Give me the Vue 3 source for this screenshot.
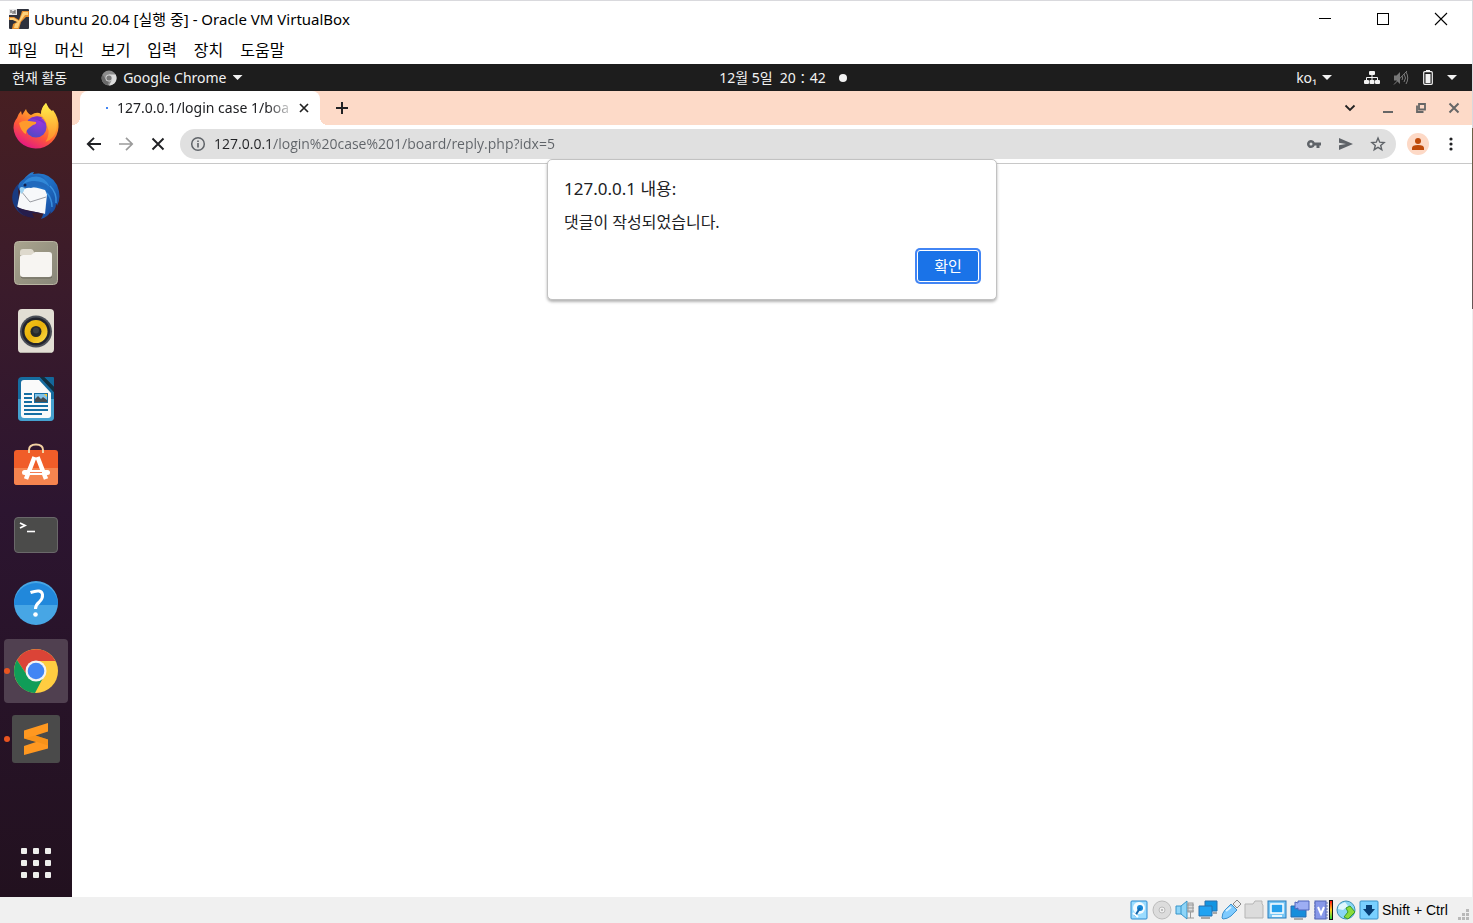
<script setup>
const menus = ['파일', '머신', '보기', '입력', '장치', '도움말']
const tiles = Array.from({ length: 9 }, (_, i) => ({ x: 9 + (i % 3) * 12, y: 9 + Math.floor(i / 3) * 12 }))
</script>

<template>
  <div class="window">
    <header class="titlebar">
      <svg class="app-icon" width="20" height="20" viewBox="0 0 20 20">
        <rect width="20" height="20" rx="1" fill="#2f323d" />
        <path d="M0 8h5l5 3 3-9h7v6h-3l-5 5-2 7H3l1-5 4-2-4-2H0z" fill="#e8902f" />
        <path d="M1 9h4l5 3 4-9h5v3h-3l-5 7-2 6H5l1-4 3-2-5-2H1z" fill="#ffd27c" />
        <rect width="8" height="6" fill="#e9e9ea" />
        <path d="M2 1v3M4 2v3M6 1v4M4.500 3H6" stroke="#555" fill="none" />
      </svg>
      <h1>Ubuntu 20.04 [실행 중] - Oracle VM VirtualBox</h1>
      <div class="win-controls">
        <button type="button" aria-label="최소화"><svg width="14" height="14" viewBox="0 0 14 14"><path d="M1 6.500h12" stroke="#000" /></svg></button>
        <button type="button" aria-label="최대화"><svg width="14" height="14" viewBox="0 0 14 14"><rect x="1.500" y="1.500" width="11" height="11" fill="none" stroke="#000" /></svg></button>
        <button type="button" aria-label="닫기"><svg width="14" height="14" viewBox="0 0 14 14"><path d="M1 1l12 12M13 1L1 13" stroke="#000" stroke-width="1.100" /></svg></button>
      </div>
    </header>

    <nav class="menubar">
      <button v-for="m in menus" :key="m" type="button">{{ m }}</button>
    </nav>

    <div class="guest">
      <div class="panel">
        <div class="panel-left">
          <button type="button" class="activities">현재 활동</button>
          <button type="button" class="app-menu">
            <svg width="16" height="16" viewBox="0 0 16 16">
              <circle cx="8" cy="8" r="7.500" fill="#8c8c8c" />
              <path d="M8 4.500h6.700A7.500 7.500 0 0 1 8 15.500l3-5.700z" fill="#dcdcdc" />
              <path d="M1.500 4.500l3.500 5.300L8 11.500l-1.500 3.800A7.500 7.500 0 0 1 1.500 4.500z" fill="#696969" />
              <circle cx="8" cy="8" r="3.500" fill="#d5d5d5" />
              <circle cx="8" cy="8" r="2.600" fill="#777" />
            </svg>
            <span>Google Chrome</span>
            <i class="caret"></i>
          </button>
        </div>
        <button type="button" class="clock"><span>12월 5일&nbsp; 20∶42</span><i class="dot"></i></button>
        <div class="panel-right">
          <button type="button" class="lang">ko₁<i class="caret"></i></button>
          <button type="button" class="system" aria-label="시스템 메뉴">
            <svg width="16" height="16" viewBox="0 0 16 16" fill="#f2f2f2">
              <rect x="5" y="1" width="6" height="4" rx="1" /><rect x="0" y="10" width="5" height="4" rx="1" /><rect x="5.500" y="10" width="5" height="4" rx="1" /><rect x="11" y="10" width="5" height="4" rx="1" />
              <path d="M8 5v5M2.500 10V7.500h11V10" fill="none" stroke="#f2f2f2" />
            </svg>
            <svg width="16" height="16" viewBox="0 0 16 16" fill="none" stroke="#7b7b7b">
              <path d="M1 5.500h2.500L7 2v12l-3.500-3.500H1z" fill="#777" stroke="none" />
              <path d="M9 6q1.500 2 0 4M11 4q3 4 0 8M13 2q3.500 6 0 12M1 14.500L14 1" />
            </svg>
            <svg width="12" height="16" viewBox="0 0 12 16">
              <path d="M4 0h4v2H4z" fill="#f2f2f2" /><rect x="1.700" y="1.700" width="8.600" height="12.600" rx="1" fill="none" stroke="#f2f2f2" stroke-width="1.200" /><path d="M3.500 4h5v9h-5z" fill="#f2f2f2" />
            </svg>
            <i class="caret"></i>
          </button>
        </div>
      </div>

      <div class="desktop">
        <aside class="dock">
          <button type="button" aria-label="Firefox">
            <svg width="48" height="48" viewBox="0 0 48 48">
              <defs>
                <linearGradient id="ff" x1=".85" y1="0" x2=".3" y2="1"><stop offset="0" stop-color="#fff44f" /><stop offset=".35" stop-color="#ffa22a" /><stop offset=".65" stop-color="#ff5a36" /><stop offset="1" stop-color="#e31587" /></linearGradient>
                <linearGradient id="fy" x1=".5" y1="0" x2=".5" y2="1"><stop offset="0" stop-color="#fff04b" /><stop offset="1" stop-color="#ff8a2b" /></linearGradient>
                <radialGradient id="fp" cx=".65" cy=".25" r=".8"><stop offset="0" stop-color="#9b35dc" /><stop offset="1" stop-color="#5149c5" /></radialGradient>
              </defs>
              <path d="M5 15q1-4 4-7l1 4 4-6q1 4 5 6 6-4 10-1 0-6 5-11 2 5 6 8l1-1q6 8 5.500 17A22.500 22.500 0 0 1 24 45.500 22 22 0 0 1 1.500 25Q1.500 19 5 15z" fill="url(#ff)" />
              <path d="M29 12q0-7 5-12 2 6 7 10 5 8 3.500 16-2 10-11 13 5-8 2-15-1-7-6.500-12z" fill="url(#fy)" />
              <circle cx="24" cy="24" r="10.500" fill="url(#fp)" />
              <path d="M7 20q4-3 10-2l7 1q1 2-3 3l-4 3q-3 2-3 6-5-2-7-11z" fill="#ff9a2b" />
              <path d="M18 16q7-5 13-1l-4 1q4 1 6 5-7-5-15-5z" fill="#7b30c9" />
            </svg>
          </button>
          <button type="button" aria-label="Thunderbird">
            <svg width="48" height="48" viewBox="0 0 48 48">
              <defs><linearGradient id="tb" x1="0" y1="0" x2="1" y2="1"><stop offset="0" stop-color="#2b7fd0" /><stop offset=".5" stop-color="#1f6ec4" /><stop offset="1" stop-color="#153f92" /></linearGradient></defs>
              <path d="M6 13Q-2 22 1 32q3 9 12 13l-6-10Z" fill="#193b82" />
              <path d="M17 3q2-2 5-2l-1 2Q37 0 45 14q5 12 0 21 0-2-1-2 0 6-6 10l1-3q-3 6-10 8 4-6 3-17L8 18Q10 8 17 3z" fill="url(#tb)" />
              <path d="M9 17q10-3 24 2l2 4-2 20L5 37z" fill="#f7f8fa" />
              <path d="M9 20l9 11 16-5" fill="none" stroke="#9a9ca3" />
              <path d="M9 21Q2 14 12 8q8-7 18-3 6 4 5 13-8-5-16-1-6-1-10 4z" fill="#2169bd" />
              <path d="M20 6q12-3 18 10-8-7-18-6-7 1-10 5 3-7 10-9z" fill="#3188d8" />
              <path d="M8 20q-1-4 2-4l3 1q-1 4-4 6z" fill="#9fd2f0" />
              <circle cx="13" cy="14" r="1.500" fill="#12204d" />
              <path d="M4 35q8 5 20 6l9 2-13-1 2 5Q8 46 4 35z" fill="#261d4c" />
              <path d="M38 15q7 7 6 17M35 22q5 6 5 14" fill="none" stroke="#3a8fdd" stroke-width="1.500" />
            </svg>
          </button>
          <button type="button" aria-label="파일">
            <svg width="48" height="48" viewBox="0 0 48 48">
              <defs><linearGradient id="fl" x1="0" y1="0" x2="1" y2="1"><stop offset="0" stop-color="#aaa58f" /><stop offset=".5" stop-color="#989482" /><stop offset="1" stop-color="#89877a" /></linearGradient></defs>
              <rect x="2.500" y="2.500" width="43" height="43" rx="4" fill="url(#fl)" stroke="#b9b5a2" />
              <path d="M8 13q0-3 3-3h8q2 0 3 3l2 3H8z" fill="#ded9cd" />
              <path d="M8 18q0-2 3-2h8l4-3h14q3 0 3 3v19q0 3-3 3H11q-3 0-3-3z" fill="#f7f5f2" />
              <path d="M9 38q1 1 2 1h26q2 0 3-1" fill="none" stroke="#6d6a60" />
            </svg>
          </button>
          <button type="button" aria-label="Rhythmbox">
            <svg width="48" height="48" viewBox="0 0 48 48">
              <defs><linearGradient id="rb" x1="0" y1="0" x2="1" y2="1"><stop offset="0" stop-color="#f6c619" /><stop offset=".5" stop-color="#e8b10c" /><stop offset="1" stop-color="#ffe14f" /></linearGradient></defs>
              <rect x="6" y="2" width="36" height="44" rx="4" fill="#e2ded4" /><path d="M8 45.500h32" stroke="#b5b1a9" />
              <circle cx="24" cy="24.500" r="16" fill="#4b4f57" /><circle cx="24" cy="24.500" r="14" fill="#22242d" /><circle cx="24" cy="24.500" r="11.500" fill="url(#rb)" /><circle cx="24" cy="24.500" r="5.500" fill="#262829" /><circle cx="24" cy="23.500" r="3" fill="#3c3f40" />
            </svg>
          </button>
          <button type="button" aria-label="LibreOffice Writer">
            <svg width="48" height="48" viewBox="0 0 48 48">
              <path d="M10 2h18l14 15v25q0 4-4 4H10q-4 0-4-4V6q0-4 4-4z" fill="#166c9f" />
              <path d="M6 24h36v18q0 4-4 4H10q-4 0-4-4z" fill="#45a1cf" />
              <path d="M12 5h15l12 13v22q0 3-3 3H12q-3 0-3-3V8q0-3 3-3z" fill="#fafafa" />
              <path d="M32 2h9q1 0 1 1v9z" fill="#13689b" /><path d="M28 2h4l10 10v5z" fill="#10303f" />
              <path d="M12 19h8M12 23h8M12 27h8M12 31h24M12 35h24M12 39h18" stroke="#156ea3" stroke-width="2" />
              <rect x="22" y="18" width="14" height="10" fill="#156ea3" /><path d="M23 19h12v8H23z" fill="#80c3e9" /><path d="M32 19h3v3z" fill="#f4c536" /><path d="M23 27v-3l3-3 3 3 2-2 4 3v2z" fill="#454c50" />
            </svg>
          </button>
          <button type="button" aria-label="Ubuntu Software">
            <svg width="48" height="48" viewBox="0 0 48 48">
              <path d="M2 10q0-3 3-3h38q3 0 3 3v29q0 3-3 3H5q-3 0-3-3z" fill="#f05d29" /><path d="M2 25h44v14q0 3-3 3H5q-3 0-3-3z" fill="#f5844f" />
              <path d="M17 10V7q0-5.500 7-5.500T31 7v3" fill="none" stroke="#f2d1a2" stroke-width="2" />
              <path d="M22.500 14L14 36M25.500 14L34 36" fill="none" stroke="#fff" stroke-width="4.500" /><rect x="10" y="27" width="28" height="5" rx="2.500" fill="#fff" /><path d="M18 29.500h12" stroke="#f05d29" stroke-width=".8" />
            </svg>
          </button>
          <button type="button" aria-label="터미널">
            <svg width="48" height="48" viewBox="0 0 48 48">
              <rect x="2.500" y="6.500" width="43" height="35" rx="3.500" fill="#4b4b4a" stroke="#6a686a" />
              <path d="M8 12l5 2.500L8 17" fill="none" stroke="#fff" stroke-width="1.800" /><path d="M15 20.500h8" stroke="#fff" stroke-width="1.600" />
            </svg>
          </button>
          <button type="button" aria-label="도움말">
            <svg width="48" height="48" viewBox="0 0 48 48">
              <circle cx="24" cy="24" r="22" fill="#47a6e5" /><path d="M2 26a22 22 0 1 1 44 0z" fill="#2188db" />
              <path d="M18.500 13.500q11-4 12 2 .5 4-3.200 7.500-3.800 3-3.800 7" fill="none" stroke="#fff" stroke-width="3" /><circle cx="23.500" cy="35.500" r="2.300" fill="#fff" />
            </svg>
          </button>
          <button type="button" class="active running" aria-label="Google Chrome">
            <svg width="48" height="48" viewBox="0 0 48 48">
              <circle cx="24" cy="24" r="22" fill="#ffcd41" />
              <path d="M5 13A22 22 0 0 1 43.500 14H24l-8.500 15z" fill="#db4437" />
              <path d="M5 13L15.500 29l8.500 5 8-5-9 17A22 22 0 0 1 5 13z" fill="#109d58" />
              <circle cx="24" cy="24" r="10.500" fill="#f3f3f3" /><circle cx="24" cy="24" r="8.300" fill="#4285f4" />
            </svg>
          </button>
          <button type="button" class="running" aria-label="Sublime Text">
            <svg width="48" height="48" viewBox="0 0 48 48">
              <rect width="48" height="48" rx="3" fill="#4a4a4a" />
              <path d="M12 15.500L36 8v8.500l-12.500 4L36 24.500v9L12 40v-9l12-4-12-3.500z" fill="#ff9820" /><path d="M12 23.500l11.500-3L36 24.500v6l-12-4z" fill="#f08b14" opacity=".5" />
            </svg>
          </button>
          <button type="button" class="apps" aria-label="프로그램 표시">
            <svg width="48" height="48" viewBox="0 0 48 48" fill="#eeeeec"><rect v-for="(t, i) in tiles" :key="i" :x="t.x" :y="t.y" width="6" height="6" rx="1" /></svg>
          </button>
        </aside>

        <main class="browser">
          <div class="tabstrip">
            <div class="tab">
              <i class="spinner"></i>
              <span class="tab-title">127.0.0.1/login case 1/boa</span>
              <button type="button" aria-label="탭 닫기"><svg width="10" height="10" viewBox="0 0 10 10"><path d="M1 1l8 8M9 1L1 9" stroke="#222" stroke-width="1.700" /></svg></button>
            </div>
            <button type="button" class="new-tab" aria-label="새 탭"><svg width="12" height="12" viewBox="0 0 12 12"><path d="M6 0v12M0 6h12" stroke="#202124" stroke-width="2" /></svg></button>
            <div class="tab-controls">
              <button type="button" aria-label="탭 검색"><svg width="12" height="12" viewBox="0 0 12 12"><path d="M1.500 3.500L6 8l4.500-4.500" fill="none" stroke="#222" stroke-width="1.800" /></svg></button>
              <button type="button" aria-label="최소화"><svg width="12" height="12" viewBox="0 0 12 12"><path d="M1 10h10" stroke="#666" stroke-width="2" /></svg></button>
              <button type="button" aria-label="이전 크기로"><svg width="12" height="12" viewBox="0 0 12 12" fill="none" stroke="#666" stroke-width="1.800"><path d="M4 2h6v5.500H4zM2 3.500V10h6.500" /></svg></button>
              <button type="button" aria-label="닫기"><svg width="12" height="12" viewBox="0 0 12 12"><path d="M1.500 1.500l9 9M10.500 1.500l-9 9" stroke="#666" stroke-width="2" /></svg></button>
            </div>
          </div>

          <div class="toolbar">
            <button type="button" aria-label="뒤로"><svg width="16" height="16" viewBox="0 0 16 16"><path d="M15 8H2.500M8 1.800L1.800 8 8 14.200" fill="none" stroke="#202124" stroke-width="1.900" /></svg></button>
            <button type="button" aria-label="앞으로"><svg width="16" height="16" viewBox="0 0 16 16"><path d="M1 8h12.500M8 1.800L14.200 8 8 14.200" fill="none" stroke="#9b9b9b" stroke-width="1.700" /></svg></button>
            <button type="button" aria-label="중지"><svg width="16" height="16" viewBox="0 0 16 16"><path d="M2.500 2.500l11 11M13.500 2.500l-11 11" stroke="#202124" stroke-width="1.900" /></svg></button>
            <div class="omnibox">
              <svg width="16" height="16" viewBox="0 0 16 16"><circle cx="8" cy="8" r="6.300" fill="none" stroke="#5f6368" stroke-width="1.500" /><path d="M8 7v4.500M8 4.500V6" stroke="#5f6368" stroke-width="1.600" /></svg>
              <input type="text" aria-label="주소창" value="127.0.0.1/login%20case%201/board/reply.php?idx=5" />
              <button type="button" aria-label="비밀번호"><svg width="16" height="16" viewBox="0 0 16 16"><path d="M8.700 6.500H15v3h-1.500V12h-3V9.500H8.700A4 4 0 1 1 8.700 6.500zM5 6.500a1.500 1.500 0 1 0 0 3 1.500 1.500 0 0 0 0-3z" fill="#5f6368" fill-rule="evenodd" /></svg></button>
              <button type="button" aria-label="공유"><svg width="16" height="16" viewBox="0 0 16 16"><path d="M1 2l14 6-14 6V9.300L8 8 1 6.700z" fill="#5f6368" /></svg></button>
              <button type="button" aria-label="북마크"><svg width="16" height="16" viewBox="0 0 16 16"><path d="M8 2l1.700 4.200 4.400.3-3.400 2.900 1.100 4.300L8 11.400l-3.800 2.300 1.100-4.300L1.900 6.500l4.400-.3z" fill="none" stroke="#5f6368" stroke-width="1.400" /></svg></button>
            </div>
            <button type="button" class="avatar" aria-label="프로필"><svg width="22" height="22" viewBox="0 0 22 22"><circle cx="11" cy="11" r="11" fill="#fdd9c6" /><circle cx="11" cy="8" r="3" fill="#bf4a0a" /><path d="M5 17v-2q0-3 6-3t6 3v2z" fill="#bf4a0a" /></svg></button>
            <button type="button" class="more" aria-label="더보기"><svg width="16" height="16" viewBox="0 0 16 16" fill="#202124"><circle cx="8" cy="3" r="1.600" /><circle cx="8" cy="8" r="1.600" /><circle cx="8" cy="13" r="1.600" /></svg></button>
          </div>

          <section class="dialog" role="alertdialog" aria-labelledby="dlg-title" aria-describedby="dlg-text">
            <h2 id="dlg-title">127.0.0.1 내용:</h2>
            <p id="dlg-text">댓글이 작성되었습니다.</p>
            <button type="button" class="confirm">확인</button>
          </section>
        </main>
      </div>
    </div>

    <footer class="statusbar">
      <svg width="20" height="20" viewBox="0 0 20 20"><rect x="2" y="1" width="16" height="18" rx="1" fill="#9bdcff" stroke="#2c8bd0" /><circle cx="10" cy="8" r="6" fill="#f4fbff" /><circle cx="11" cy="8" r="3" fill="#1686d6" /><path d="M6 16l5-8" stroke="#1667ab" stroke-width="2" /><path d="M4 13l5 4" stroke="#fff" stroke-width="2" /></svg>
      <svg width="20" height="20" viewBox="0 0 20 20"><circle cx="10" cy="10" r="9" fill="#dcdcdc" stroke="#bbb" /><circle cx="10" cy="10" r="3" fill="#efefef" stroke="#bbb" /><circle cx="10" cy="10" r="1" fill="#aaa" /></svg>
      <svg width="20" height="20" viewBox="0 0 20 20"><path d="M1 6h5l6-5v18l-6-5H1z" fill="#8ed5f8" stroke="#3794c9" /><path d="M6 6v8" stroke="#3794c9" /><rect x="13" y="3" width="5" height="9" fill="#ddd" stroke="#999" /><path d="M12 5h7M12 8h7M12 11h7M15.500 12v6M12 18h7" stroke="#999" /></svg>
      <svg width="20" height="20" viewBox="0 0 20 20"><path d="M7 1h12v10H7z" fill="#1295e2" stroke="#2870ad" /><path d="M1 6h13v10H1z" fill="#21a3f2" stroke="#2870ad" /><path d="M3 18h9M15 13h4" stroke="#a7a7a7" stroke-width="2" /></svg>
      <svg width="20" height="20" viewBox="0 0 20 20"><path d="M12 4l4-4 4 4-4 4z" fill="#eee" stroke="#888" /><path d="M10 4l6 6-6 6q-4 3-8 3l-1-1q0-5 3-8z" fill="#7fcbff" stroke="#3d91ce" /><path d="M5 11l5-4" stroke="#d9f1ff" stroke-width="2" /></svg>
      <svg width="20" height="20" viewBox="0 0 20 20"><path d="M1 4h8l2-3h7v3l1 1v13H1z" fill="#dcdcdc" stroke="#b5b5b5" /></svg>
      <svg width="20" height="20" viewBox="0 0 20 20"><rect x="1" y="1" width="18" height="17" fill="#79c7f5" stroke="#297dbc" /><path d="M4 4h12v9H4z" fill="#26a0ec" stroke="#fff" stroke-width="1.500" /><path d="M5 16h10" stroke="#e6f6ff" stroke-width="2" /></svg>
      <svg width="20" height="20" viewBox="0 0 20 20"><path d="M1 6h15v11H1z" fill="#168edb" stroke="#286db0" /><path d="M5 2l3 1V1h11v9H8V8l-3 1z" fill="#9daef4" stroke="#5067bd" /><path d="M4 19h9" stroke="#aaa" stroke-width="2" /></svg>
      <svg width="20" height="20" viewBox="0 0 20 20"><path d="M1 3h14M1 6h14M1 9h14M1 12h14M1 15h14M1 18h14" stroke="#6373bd" /><rect x="2" y="1" width="11" height="18" fill="#8798e9" stroke="#5265b3" /><path d="M5 7l3 7 3-7" fill="none" stroke="#fff" stroke-width="2" /><defs><linearGradient id="ld" x1="0" y1="0" x2="0" y2="1"><stop stop-color="#f11" /><stop offset=".5" stop-color="#ffd323" /><stop offset="1" stop-color="#22d338" /></linearGradient></defs><path d="M16 0h4v20h-4z" fill="#111" /><path d="M17 1h2v18h-2z" fill="url(#ld)" /></svg>
      <svg width="20" height="20" viewBox="0 0 20 20"><circle cx="10" cy="10" r="9" fill="#89d6f5" stroke="#3b91b7" /><path d="M3 5l6-3 3 4-5 4-5-1z" fill="#dff7ff" /><path d="M10 8l4-2 5 6-7 7-4-2 4-5z" fill="#8bdb3d" stroke="#389b29" /></svg>
      <svg width="20" height="20" viewBox="0 0 20 20"><rect x="1" y="1" width="18" height="18" rx="1" fill="#79d0ff" stroke="#3a93ca" /><path d="M7 5h6v4h3l-6 7-6-7h3z" fill="#083f76" /></svg>
      <span>Shift + Ctrl</span>
      <svg class="grip" width="12" height="12" viewBox="0 0 12 12" fill="#b9b9b9"><path d="M8 0h3v3H8zM4 4h3v3H4zM8 4h3v3H8zM0 8h3v3H0zM4 8h3v3H4zM8 8h3v3H8z" /></svg>
    </footer>
    <i class="edge"></i>
  </div>
</template>

<style>
body { margin: 0; }
</style>

<style scoped>
* { box-sizing: border-box; }
button { border: 0; padding: 0; background: none; color: inherit; font: inherit; display: inline-flex; align-items: center; justify-content: center; white-space: nowrap; }
svg { display: block; flex: none; }
.window { position: relative; min-height: 100vh; display: flex; flex-direction: column; background: #fff; color: #000; font-family: "Noto Sans", "Noto Sans CJK KR", sans-serif; }
.titlebar { height: 37px; padding-left: 9px; display: flex; align-items: center; border-top: 1px solid #d9d9dd; }
.titlebar h1 { margin: 0 0 0 5px; font: 400 15px/24px "Noto Sans", "Noto Sans CJK KR", sans-serif; }
.win-controls { margin-left: auto; display: flex; padding-right: 3px; }
.win-controls button { width: 58px; height: 36px; }
.menubar { height: 27px; padding: 0 0 2px 8px; display: flex; gap: 17px; font: 400 16px/25px "Noto Sans CJK KR", sans-serif; }
.guest { flex: 1; display: flex; flex-direction: column; margin-right: 1px; }
.panel { height: 27px; background: #1d1d1d; color: #f2f2f2; display: grid; grid-template-columns: 1fr auto 1fr; font-size: 14px; line-height: 27px; }
.panel-left, .panel-right { display: flex; align-items: center; }
.panel-left { padding-left: 12px; gap: 34px; }
.app-menu { gap: 6px; }
.panel-right { justify-content: flex-end; padding-right: 15px; gap: 32px; }
.caret { width: 10px; height: 5px; background: #f2f2f2; clip-path: polygon(0 0, 100% 0, 50% 100%); }
.lang { gap: 5px; }
.system { gap: 13px; }
.clock { gap: 13px; padding-left: 94px; }
.dot { width: 8px; height: 8px; border-radius: 50%; background: #f2f2f2; }
.desktop { flex: 1; display: flex; }
.dock { width: 72px; padding: 4px 4px 2px; display: flex; flex-direction: column; gap: 4px; background: linear-gradient(#471f22, #3a1b2b 25%, #2c1530 52%, #22111f); }
.dock button { position: relative; width: 64px; height: 64px; border-radius: 4px; }
.dock .active { background: #504050; }
.running::before { content: ""; position: absolute; left: 0; top: 29px; width: 6px; height: 6px; border-radius: 50%; background: #e95420; }
.dock .apps { margin-top: auto; }
.browser { position: relative; flex: 1; min-width: 0; }
.tabstrip { height: 34px; display: flex; align-items: center; padding-left: 8px; background: #fddac8; color: #202124; font-size: 14px; line-height: 20px; }
.tab { position: relative; width: 240px; height: 34px; display: flex; align-items: center; padding: 0 11px 0 26px; background: #fff; border-radius: 8px 8px 0 0; }
.tab::before, .tab::after { content: ""; position: absolute; bottom: 0; width: 8px; height: 8px; }
.tab::before { right: 100%; background: radial-gradient(circle at 0 0, transparent 8px, #fff 8px); }
.tab::after { left: 100%; background: radial-gradient(circle at 100% 0, transparent 8px, #fff 8px); }
.spinner { width: 2px; height: 2px; background: #4285f4; }
.tab-title { flex: 1; margin: 0 6px 0 9px; padding-bottom: 1px; white-space: nowrap; -webkit-mask-image: linear-gradient(90deg, #000 150px, transparent 178px); mask-image: linear-gradient(90deg, #000 150px, transparent 178px); }
.new-tab { width: 28px; height: 28px; margin-left: 8px; }
.tab-controls { margin-left: auto; display: flex; gap: 21px; padding-right: 12px; }
.tab-controls button:first-child { margin-right: 5px; }
.toolbar { height: 39px; display: flex; align-items: center; gap: 16px; padding: 0 13px 0 14px; border-bottom: 1px solid #c8c8c8; }
.omnibox { flex: 1; height: 30px; margin-left: -2px; display: flex; align-items: center; gap: 16px; padding: 0 10px; border-radius: 15px; background: #e0e0e0; }
.omnibox input { flex: 1; min-width: 0; margin-left: -8px; padding: 0; border: 0; outline: 0; font: 400 14px/20px "Open Sans", sans-serif; color: transparent; background: linear-gradient(90deg, #202124 58px, #5f6368 58px); -webkit-background-clip: text; background-clip: text; }
.avatar { margin-left: -5px; }
.more { margin-left: -2px; }
.dialog { position: absolute; top: 68px; left: 0; right: 0; margin: 0 auto; width: 450px; padding: 17px 17px 17px 16px; display: flex; flex-direction: column; background: #fff; border: 1px solid #c2c2c2; border-radius: 5px; box-shadow: 0 2px 3px rgba(0, 0, 0, .3); color: #202124; }
.dialog h2 { margin: 0; font-size: 17px; line-height: 24px; font-weight: 400; }
.dialog p { margin: 9px 0 16px; font-size: 16px; line-height: 24px; }
.confirm { align-self: flex-end; width: 62px; height: 32px; padding-bottom: 2px; border: 1px solid #fff; border-radius: 3px; box-shadow: 0 0 0 2px #4285f4; background: #1a73e8; color: #fff; font-size: 15px; }
.statusbar { height: 26px; padding: 0 3px; display: flex; align-items: center; justify-content: flex-end; gap: 3px; background: #f0f0f0; font: 400 14px/24px "Liberation Sans", sans-serif; }
.statusbar span { min-width: 69px; }
.grip { align-self: flex-end; margin: 0 0 2px 4px; }
.edge { position: absolute; top: 0; right: 0; bottom: 26px; width: 1px; background: linear-gradient(#d9d9dd 128px, #6e6248 128px, #665657 309px, #eee 309px); }
</style>
